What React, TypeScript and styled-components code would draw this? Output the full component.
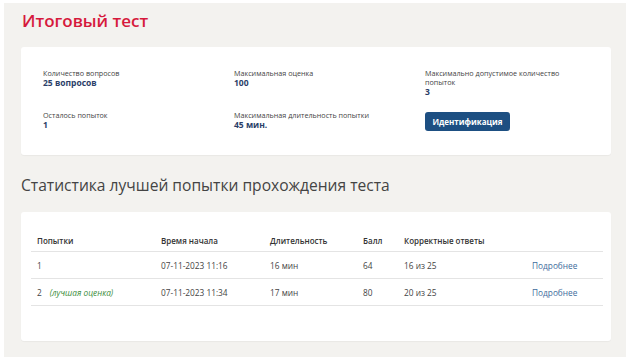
import React from 'react'
import styled, { createGlobalStyle } from 'styled-components'

const GlobalStyle = createGlobalStyle`
	html, body {
		margin: 0;
		padding: 0;
		background: #ffffff;
	}
	body {
		font-family: 'Open Sans', 'Noto Sans', sans-serif;
		color: #444;
	}
`

type Attempt = {
	num: number
	best?: boolean
	start: string
	duration: string
	score: number
	correct: string
}

const attempts: Attempt[] = [
	{ num: 1, start: '07-11-2023 11:16', duration: '16 мин', score: 64, correct: '16 из 25' },
	{ num: 2, best: true, start: '07-11-2023 11:34', duration: '17 мин', score: 80, correct: '20 из 25' },
]

const App = () => {
	return (
		<>
			<GlobalStyle />
			<Frame>
				<Page>
					<Title>Итоговый тест</Title>

					<Card $pad='22px 20px 24px 22px'>
						<InfoGrid>
							<Field>
								<Label>Количество вопросов</Label>
								<Value>25 вопросов</Value>
							</Field>
							<Field>
								<Label>Максимальная оценка</Label>
								<Value>100</Value>
							</Field>
							<Field>
								<Label>
									Максимально допустимое количество
									<br />
									попыток
								</Label>
								<Value>3</Value>
							</Field>
							<Field>
								<Label>Осталось попыток</Label>
								<Value>1</Value>
							</Field>
							<Field>
								<Label>Максимальная длительность попытки</Label>
								<Value>45 мин.</Value>
							</Field>
							<Field>
								<Button>Идентификация</Button>
							</Field>
						</InfoGrid>
					</Card>

					<Heading>Статистика лучшей попытки прохождения теста</Heading>

					<Card $pad='17px 8px 35px 10px'>
						<Table>
							<colgroup>
								<col style={{ width: 124 }} />
								<col style={{ width: 109 }} />
								<col style={{ width: 93 }} />
								<col style={{ width: 41 }} />
								<col style={{ width: 128 }} />
								<col />
							</colgroup>
							<thead>
								<tr>
									<Th>Попытки</Th>
									<Th>Время начала</Th>
									<Th>Длительность</Th>
									<Th>Балл</Th>
									<Th>Корректные ответы</Th>
									<Th />
								</tr>
							</thead>
							<tbody>
								{attempts.map((a) => (
									<tr key={a.num}>
										<Td>
											{a.num}
											{a.best && <Best>(лучшая оценка)</Best>}
										</Td>
										<Td>{a.start}</Td>
										<Td>{a.duration}</Td>
										<Td>{a.score}</Td>
										<Td>{a.correct}</Td>
										<Td>
											<More href='#'>Подробнее</More>
										</Td>
									</tr>
								))}
							</tbody>
						</Table>
					</Card>
				</Page>
			</Frame>
		</>
	)
}

export default App

const Frame = styled.div`
	padding: 3px 4px 6px 4px;
	width: 630px;
	height: 363px;
	box-sizing: border-box;
`

const Page = styled.div`
	background: #f3f2ef;
	height: 354px;
	padding: 3px 15px 0 17px;
	box-sizing: border-box;
`

const Title = styled.h1`
	margin: 0 0 0 1px;
	height: 41px;
	font-size: 17px;
	line-height: 30px;
	font-weight: 600;
	color: #d6193c;
`

const Card = styled.div<{ $pad: string }>`
	background: #ffffff;
	border-radius: 3px;
	padding: ${(p) => p.$pad};
	box-shadow: 0 1px 1px rgba(0, 0, 0, 0.04);
`

const InfoGrid = styled.div`
	display: grid;
	grid-template-columns: 191px 191px auto;
	row-gap: 14px;
`

const Field = styled.div`
	display: flex;
	flex-direction: column;
	align-items: flex-start;
`

const Label = styled.div`
	font-size: 7.2px;
	line-height: 9px;
	color: #444;
`

const Value = styled.div`
	font-size: 8.5px;
	line-height: 10px;
	font-weight: 700;
	color: #2b3e68;
`

const Button = styled.button`
	margin-top: 1px;
	height: 19px;
	width: 85px;
	border: none;
	border-radius: 3px;
	background: #1d4f82;
	color: #ffffff;
	font-family: 'Open Sans', 'Noto Sans', sans-serif;
	font-size: 8px;
	font-weight: 700;
	padding: 0;
	cursor: pointer;
`

const Heading = styled.h2`
	margin: 0;
	padding: 19px 0 0 0;
	height: 57px;
	box-sizing: border-box;
	font-size: 15.6px;
	line-height: 22px;
	font-weight: 400;
	color: #444;
`

const Table = styled.table`
	width: 100%;
	border-collapse: collapse;
	table-layout: fixed;
`

const Th = styled.th`
	height: 22px;
	padding: 0 0 0 6px;
	text-align: left;
	font-size: 8px;
	font-weight: 600;
	color: #333;
	border-bottom: 1px solid #e4e4e4;
`

const Td = styled.td`
	height: 26px;
	padding: 0 0 0 6px;
	font-size: 8.3px;
	color: #444;
	border-bottom: 1px solid #e4e4e4;
`

const Best = styled.i`
	margin-left: 8px;
	color: #3b8d3b;
`

const More = styled.a`
	color: #3d6c9c;
	text-decoration: none;
`
